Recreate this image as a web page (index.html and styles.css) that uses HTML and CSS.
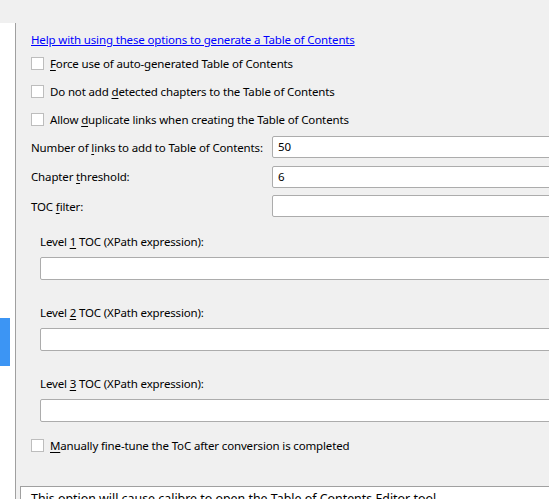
FILE: index.html
```html
<!DOCTYPE html>
<html>
<head>
<meta charset="utf-8">
<link rel="stylesheet" href="styles.css">
</head>
<body>
<div class="frame">
  <div class="side">
    <div class="side-sel"></div>
  </div>
  <div class="main">
    <a class="help" href="#">Help with using these options to generate a Table of Contents</a>
    <div class="checks">
      <label class="cb"><span class="box"></span><span><u>F</u>orce use of auto-generated Table of Contents</span></label>
      <label class="cb"><span class="box"></span><span>Do not add <u>d</u>etected chapters to the Table of Contents</span></label>
      <label class="cb"><span class="box"></span><span>Allow <u>d</u>uplicate links when creating the Table of Contents</span></label>
    </div>
    <div class="form">
      <span class="lbl">Number of <u>l</u>inks to add to Table of Contents:</span>
      <div class="field">50</div>
      <span class="lbl">Chapter <u>t</u>hreshold:</span>
      <div class="field">6</div>
      <span class="lbl">TOC <u>f</u>ilter:</span>
      <div class="field"></div>
    </div>
    <div class="levels">
      <div class="level">
        <div class="level-lbl">Level <u>1</u> TOC (XPath expression):</div>
        <div class="wide"></div>
      </div>
      <div class="level">
        <div class="level-lbl">Level <u>2</u> TOC (XPath expression):</div>
        <div class="wide"></div>
      </div>
      <div class="level">
        <div class="level-lbl">Level <u>3</u> TOC (XPath expression):</div>
        <div class="wide"></div>
      </div>
    </div>
    <label class="cb manual"><span class="box"></span><span><u>M</u>anually fine-tune the ToC after conversion is completed</span></label>
    <div class="help-box"><p class="help-text">This option will cause calibre to open the Table of Contents Editor tool after the conversion is complete, allowing you to fine-tune it.</p></div>
  </div>
</div>
</body>
</html>
```

FILE: styles.css
```css
html, body {
  margin: 0;
  padding: 0;
}
body {
  width: 549px;
  height: 499px;
  overflow: hidden;
  background: #f0f0f0;
  font-family: "Noto Sans", "Liberation Sans", sans-serif;
  font-size: 11.5px;
  letter-spacing: -0.15px;
  color: #000;
}
.frame {
  display: flex;
  height: 499px;
}
.side {
  width: 15px;
  flex: none;
  margin-top: 23px;
  background: #fff;
  border-right: 1px solid #a0a0a0;
  padding-top: 295px;
}
.side-sel {
  width: 10px;
  height: 48px;
  background: #3c95f4;
}
.main {
  flex: 1;
  min-width: 0;
  padding-left: 15px;
  padding-top: 32px;
  display: flex;
  flex-direction: column;
  overflow: hidden;
}
u {
  text-decoration: underline;
  text-underline-offset: 2px;
}
.help {
  color: #0000ff;
  line-height: 16px;
  text-decoration: underline;
  white-space: nowrap;
  align-self: flex-start;
}
.checks {
  margin-top: 5px;
  display: flex;
  flex-direction: column;
  gap: 8px;
}
.cb {
  display: flex;
  align-items: center;
  height: 20px;
  white-space: nowrap;
}
.box {
  width: 11px;
  height: 11px;
  border: 1px solid #bdbdbd;
  background: #fff;
  margin-right: 6px;
  flex: none;
}
.form {
  margin-top: 7px;
  display: grid;
  grid-template-columns: 241px 320px;
  grid-auto-rows: 22px;
  row-gap: 7.5px;
  align-items: center;
}
.lbl {
  white-space: nowrap;
}
.field, .wide {
  border: 1px solid #acacac;
  border-radius: 2px;
  background: #fff;
  box-sizing: border-box;
  padding-left: 5px;
  line-height: 19px;
}
.field {
  height: 22px;
}
.levels {
  margin-top: 17px;
  padding-left: 9px;
  display: flex;
  flex-direction: column;
  gap: 25px;
}
.level-lbl {
  line-height: 16px;
  white-space: nowrap;
}
.wide {
  margin-top: 7px;
  height: 23px;
  width: 540px;
}
.manual {
  margin-top: 16px;
}
.help-box {
  margin-top: 33px;
  margin-left: -11px;
  border-top: 1px solid #a0a0a0;
  border-left: 1px solid #a0a0a0;
  background: #fff;
  padding: 3px 0 0 10px;
  height: 40px;
}
.help-text {
  margin: 0;
  width: 420px;
  font-size: 12.4px;
  letter-spacing: 0;
  line-height: 17px;
}
```
